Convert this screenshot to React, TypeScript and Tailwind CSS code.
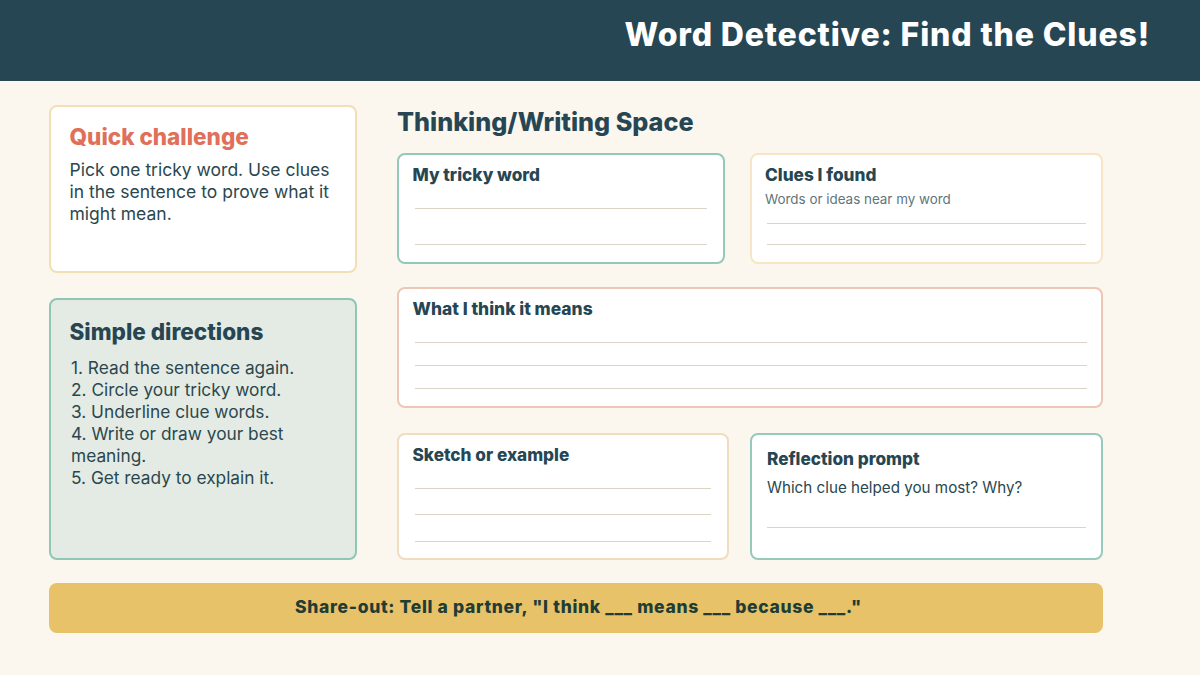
const font = "font-['Inter','Liberation_Sans',sans-serif]";

type RuleProps = { className: string };

function Rule({ className }: RuleProps): React.JSX.Element {
  return <div className={`h-px bg-[#dbd5c8] ${className}`} />;
}

export default function App(): React.JSX.Element {
  return (
    <div className={`${font} w-[1200px] h-[675px] overflow-hidden bg-[#fbf6ee] text-[#264653]`}>
      <header className="h-[81px] bg-[#264653] flex items-center justify-end pr-[50px] pb-[11px]">
        <h1 className="text-[32px] font-extrabold text-white tracking-[0.85px]">Word Detective: Find the Clues!</h1>
      </header>

      <main className="pt-[24px] pl-[49px] w-[1103px]">
        <div className="flex gap-[40px] h-[455px]">
          {/* Левая колонка */}
          <div className="w-[308px] flex flex-col gap-[25px]">
            <section className="h-[168px] bg-white border-2 border-[#f1e0b4] rounded-[8px] px-[18.5px] pt-[14.5px]">
              <h2 className="text-[22.5px] leading-[30px] font-extrabold text-[#e0705a]">Quick challenge</h2>
              <p className="mt-[7px] text-[17.5px] leading-[22px] text-[#2a474f]">
                Pick one tricky word. Use clues in the sentence to prove what it might mean.
              </p>
            </section>

            <section className="h-[262px] bg-[#e4ebe4] border-2 border-[#8fc6b5] rounded-[8px] px-[18.5px] pt-[16.5px]">
              <h2 className="text-[22.5px] leading-[30px] font-extrabold">Simple directions</h2>
              <ol className="mt-[10px] ml-[1.5px] text-[17.3px] leading-[22px] text-[#2a474f]">
                <li>1. Read the sentence again.</li>
                <li>2. Circle your tricky word.</li>
                <li>3. Underline clue words.</li>
                <li>4. Write or draw your best meaning.</li>
                <li>5. Get ready to explain it.</li>
              </ol>
            </section>
          </div>

          {/* Правая колонка */}
          <div className="w-[706px] flex flex-col">
            <h2 className="h-[48px] text-[25.2px] leading-[34px] font-extrabold">Thinking/Writing Space</h2>

            <div className="flex justify-between h-[111px]">
              <section className="w-[328px] bg-white border-2 border-[#93c9ba] rounded-[8px] pl-[13.5px] pr-[16px] pt-[8.5px]">
                <h3 className="text-[17.2px] leading-[22px] font-extrabold">My tricky word</h3>
                <Rule className="mt-[22px] ml-[2px]" />
                <Rule className="mt-[35px] ml-[2px]" />
              </section>
              <section className="w-[353px] bg-white border-2 border-[#f6e6c6] rounded-[8px] pl-[13px] pr-[15px] pt-[8.5px]">
                <h3 className="text-[17.2px] leading-[22px] font-extrabold">Clues I found</h3>
                <p className="mt-[4px] text-[13.4px] leading-[18px] text-[#5f757b]">Words or ideas near my word</p>
                <Rule className="mt-[15px] ml-[2px]" />
                <Rule className="mt-[20px] ml-[2px]" />
              </section>
            </div>

            <section className="mt-[23px] h-[121px] bg-white border-2 border-[#edc6b6] rounded-[8px] pl-[13.5px] pr-[14.5px] pt-[8.5px]">
              <h3 className="text-[17.4px] leading-[22px] font-extrabold">What I think it means</h3>
              <Rule className="mt-[22px] ml-[2px]" />
              <Rule className="mt-[22px] ml-[2px]" />
              <Rule className="mt-[22px] ml-[2px]" />
            </section>

            <div className="mt-[25px] flex justify-between h-[127px]">
              <section className="w-[332px] bg-white border-2 border-[#f1dcc0] rounded-[8px] pl-[13.5px] pr-[16px] pt-[8.5px]">
                <h3 className="text-[17.2px] leading-[22px] font-extrabold">Sketch or example</h3>
                <Rule className="mt-[22px] ml-[2px]" />
                <Rule className="mt-[25px] ml-[2px]" />
                <Rule className="mt-[26px] ml-[2px]" />
              </section>
              <section className="w-[353px] bg-white border-2 border-[#98c9bd] rounded-[8px] px-[15px] pt-[12.5px]">
                <h3 className="text-[17.2px] leading-[22px] font-extrabold">Reflection prompt</h3>
                <p className="mt-[7px] text-[15.2px] leading-[22px] text-[#2a474f]">Which clue helped you most? Why?</p>
                <Rule className="mt-[28px]" />
              </section>
            </div>
          </div>
        </div>

        <footer className="mt-[23px] h-[50px] bg-[#e8c268] rounded-[8px] flex items-center justify-center pb-[2px] pl-[5px] text-[17.5px] font-extrabold tracking-[0.66px] text-[#1f3d35]">
          Share-out: Tell a partner, "I think ___ means ___ because ___."
        </footer>
      </main>
    </div>
  );
}
